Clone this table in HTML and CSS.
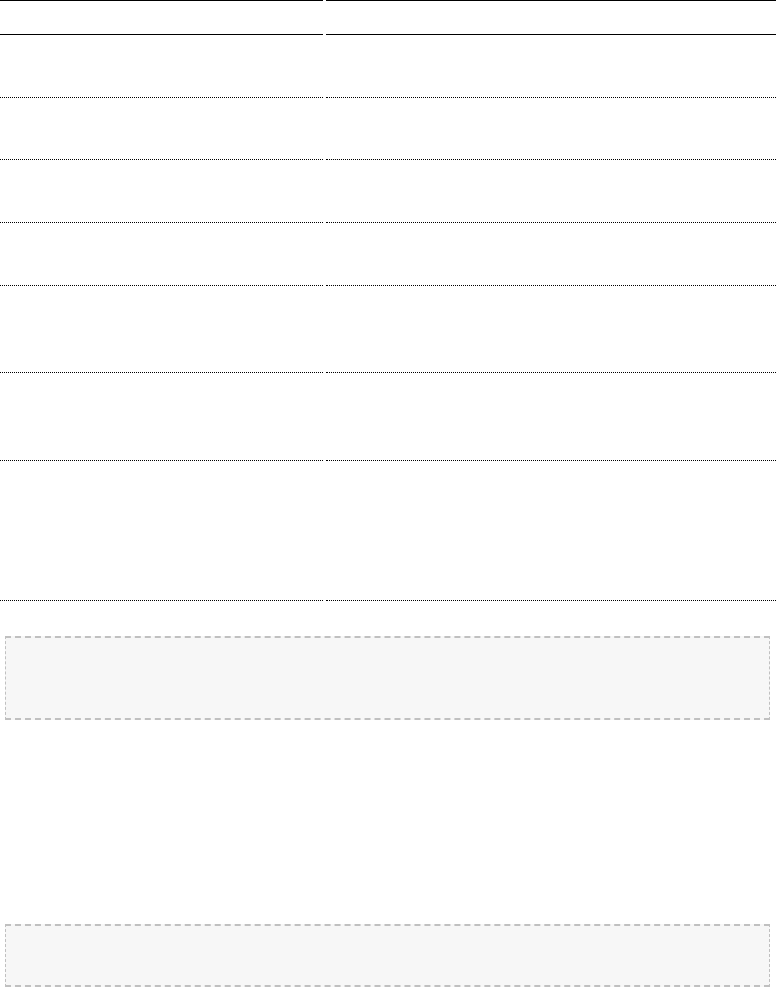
FILE: index.html
```html
<!DOCTYPE html>
<html>
<head>
<meta charset="utf-8">
<link rel="stylesheet" href="styles.css">
</head>
<body>
<div class="grid">
  <div class="cell head"></div><div class="cell head"></div>
  <div class="cell r1"></div><div class="cell r1"></div>
  <div class="cell r2"></div><div class="cell r2"></div>
  <div class="cell r1"></div><div class="cell r1"></div>
  <div class="cell r1"></div><div class="cell r1"></div>
  <div class="cell r5"></div><div class="cell r5"></div>
  <div class="cell r6"></div><div class="cell r6"></div>
  <div class="cell r7"></div><div class="cell r7"></div>
</div>
<div class="code code1"></div>
<div class="code code2"></div>
</body>
</html>
```
FILE: styles.css
```css
html, body {
  margin: 0;
  padding: 0;
  background: #fff;
  font-family: "Liberation Sans", Arial, sans-serif;
}
.grid {
  display: grid;
  grid-template-columns: 323px 1fr;
  column-gap: 3px;
}
.cell {
  border-bottom: 1px dotted #000;
}
.head {
  height: 33px;
  border-top: 1px solid #000;
  border-bottom: 1px solid #000;
}
.r1 { height: 62px; }
.r2 { height: 61px; }
.r5 { height: 86px; }
.r6 { height: 87px; }
.r7 { height: 139px; }
.code {
  margin: 0 6px 0 5px;
  background: #f7f7f7;
  border-style: dashed;
  border-color: #c0c0c0;
  border-width: 2px 1px;
}
.code1 {
  margin-top: 35px;
  height: 80px;
}
.code2 {
  margin-top: 204px;
  height: 59px;
}
```
